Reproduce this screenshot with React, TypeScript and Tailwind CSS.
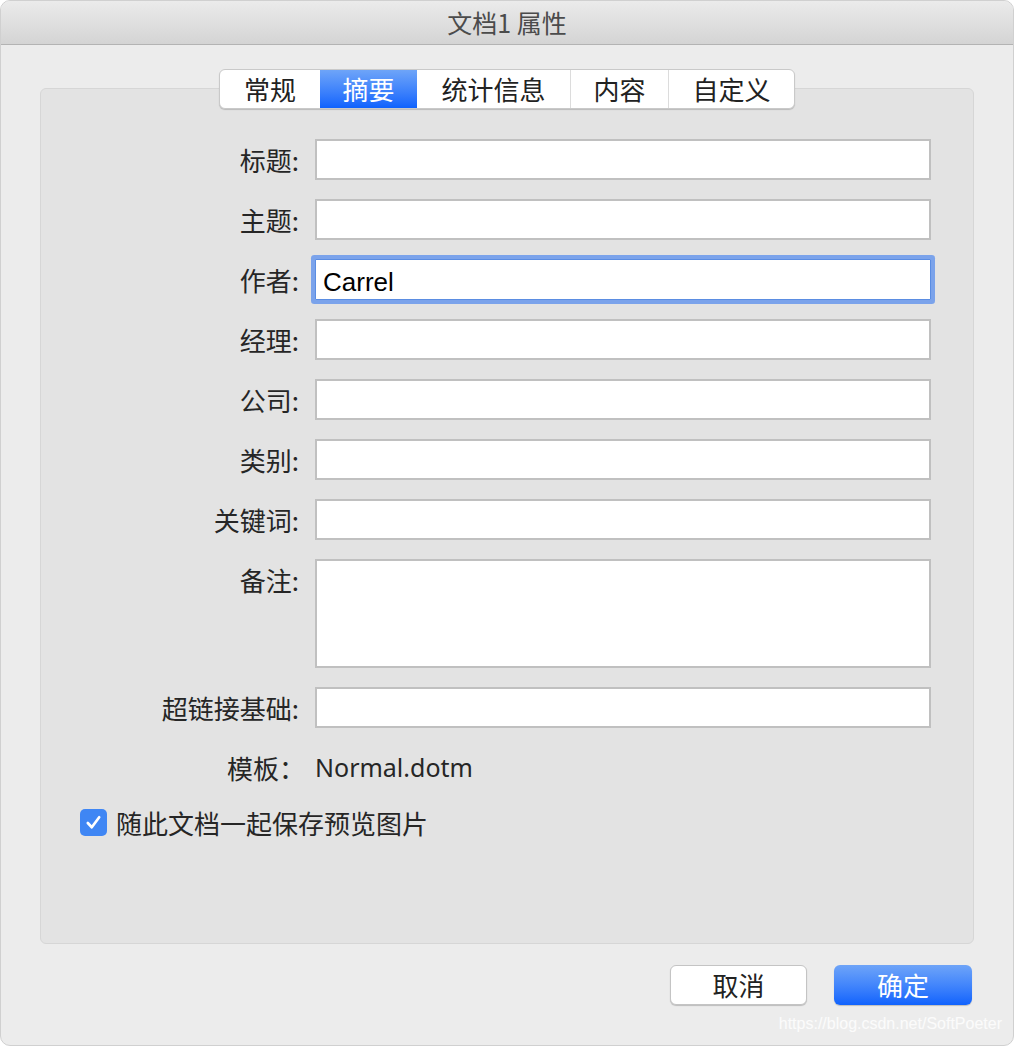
import { useState } from 'react';

const TABS = [
  { label: '常规', width: 'w-[100px]' },
  { label: '摘要', width: 'w-[97px]' },
  { label: '统计信息', width: 'w-[153px]' },
  { label: '内容', width: 'w-[98px]' },
  { label: '自定义', width: 'w-[126px]' },
];

const FIELDS = [
  { label: '标题', value: '' },
  { label: '主题', value: '' },
  { label: '作者', value: 'Carrel', focused: true },
  { label: '经理', value: '' },
  { label: '公司', value: '' },
  { label: '类别', value: '' },
  { label: '关键词', value: '' },
];

const FONT = "font-['Noto_Sans_CJK_SC','Noto_Sans',sans-serif]";

export default function App() {
  const [active, setActive] = useState(1);
  const [savePreview, setSavePreview] = useState(true);

  return (
    <div className={`relative w-[1014px] h-[1046px] overflow-hidden rounded-[10px] bg-[#ececec] border border-[#d0d0d0] ${FONT} text-[#262626]`}>
      {/* Title bar */}
      <div className="h-[44px] flex items-center justify-center bg-gradient-to-b from-[#ebebeb] to-[#d4d4d4] border-b border-[#b3b3b3]">
        <span className="text-[25px] text-[#4b4b4b] leading-none">文档1 属性</span>
      </div>

      {/* Tabs */}
      <div className="relative z-10 mt-[24px] flex justify-center">
        <div className="flex h-[40px] rounded-[6px] bg-white border border-[#c9c9c9] shadow-[0_1px_1px_rgba(0,0,0,0.18)] overflow-hidden">
          {TABS.map((tab, i) => (
            <button
              key={tab.label}
              onClick={() => setActive(i)}
              className={`${tab.width} h-full flex items-center justify-center text-[26px] leading-none ${
                i === active
                  ? 'bg-gradient-to-b from-[#6ea4f8] to-[#0e62fd] text-white'
                  : 'text-[#222]'
              } ${i > 2 ? 'border-l border-[#dcdcdc]' : ''}`}
            >
              {tab.label}
            </button>
          ))}
        </div>
      </div>

      {/* Panel */}
      <div className="mx-[39px] -mt-[21px] h-[856px] rounded-[6px] bg-[#e3e3e3] border border-[#d6d6d6] pt-[50px]">
        <div className="grid grid-cols-[258px_616px] gap-x-[16px] gap-y-[19px]">
          {FIELDS.map((f) => (
            <div key={f.label} className="contents">
              <div className="h-[41px] flex items-center justify-end text-[26px] leading-none">
                {f.label}:
              </div>
              {f.focused ? (
                <div className="h-[41px] bg-white border border-[#5b8de2] ring-[4px] ring-[#7ba3eb] rounded-[1px] flex items-center px-[7px] pt-[5px] text-[26px] text-black font-['Liberation_Sans',sans-serif]">
                  {f.value}
                </div>
              ) : (
                <div className="h-[41px] bg-white border-2 border-[#c0c0c0]" />
              )}
            </div>
          ))}

          <div className="h-[41px] flex items-center justify-end text-[26px] leading-none">备注:</div>
          <div className="h-[109px] bg-white border-2 border-[#c0c0c0]" />

          <div className="h-[41px] flex items-center justify-end text-[26px] leading-none">超链接基础:</div>
          <div className="h-[41px] bg-white border-2 border-[#c0c0c0]" />

          <div className="h-[41px] flex items-center justify-end text-[26px] leading-none mr-[-6px]">模板：</div>
          <div className="h-[41px] flex items-center text-[25px] leading-none font-['Noto_Sans','Liberation_Sans',sans-serif]">
            Normal.dotm
          </div>
        </div>

        <label className="mt-[21px] ml-[39px] flex items-center gap-[9px] cursor-pointer">
          <span
            onClick={() => setSavePreview(!savePreview)}
            className={`w-[27px] h-[27px] rounded-[5px] flex items-center justify-center ${
              savePreview ? 'bg-[#3f86f4]' : 'bg-white border border-[#b0b0b0]'
            }`}
          >
            {savePreview && (
              <svg width="19" height="19" viewBox="0 0 20 20" fill="none">
                <path d="M4 10.5 L8.2 15 L16 4.5" stroke="white" strokeWidth="2.8" strokeLinecap="round" strokeLinejoin="round" />
              </svg>
            )}
          </span>
          <span className="text-[26px] leading-none">随此文档一起保存预览图片</span>
        </label>
      </div>

      {/* Buttons */}
      <div className="mt-[21px] mr-[41px] flex justify-end gap-[27px]">
        <button className="w-[137px] h-[40px] rounded-[6px] bg-white border border-[#c4c4c4] shadow-[0_1px_1px_rgba(0,0,0,0.2)] text-[26px] leading-none text-[#222]">
          取消
        </button>
        <button className="w-[138px] h-[40px] rounded-[6px] bg-gradient-to-b from-[#6ea4f8] to-[#0e62fd] shadow-[0_1px_1px_rgba(0,0,0,0.2)] text-[26px] leading-none text-white">
          确定
        </button>
      </div>

      {/* Watermark */}
      <div className="absolute right-[11px] bottom-[9px] text-[16px] text-white/80 font-['Liberation_Sans',sans-serif]">
        https://blog.csdn.net/SoftPoeter
      </div>
    </div>
  );
}
